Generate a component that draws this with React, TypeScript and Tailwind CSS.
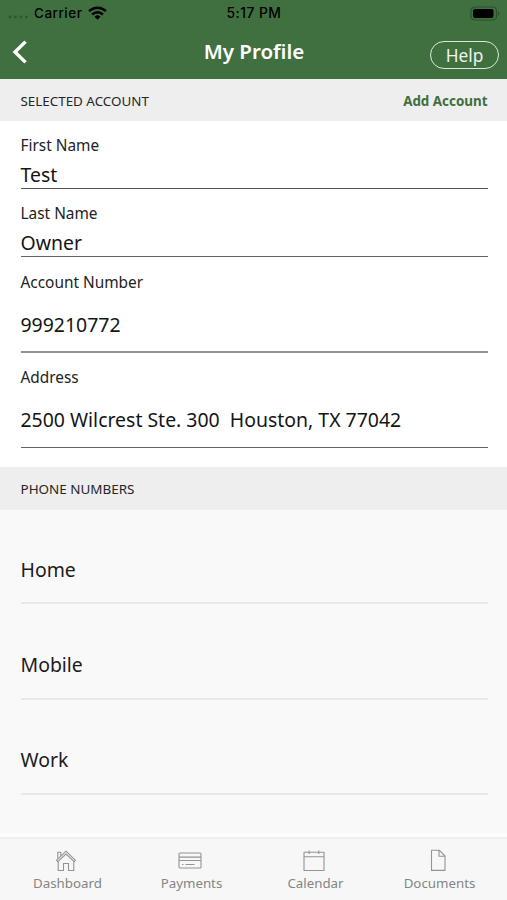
import type { ReactNode } from "react";

type FieldProps = {
  label: string;
  value: string;
  labelClass: string;
  valueClass: string;
  className: string;
};

const Field = ({ label, value, labelClass, valueClass, className }: FieldProps) => (
  <div className={`flex flex-col ${className}`}>
    <label className={`block text-[15.4px] leading-5 text-[#222] ${labelClass}`}>{label}</label>
    <div className={`whitespace-pre text-[19.45px] leading-6 text-[#151515] ${valueClass}`}>{value}</div>
  </div>
);

const PhoneRow = ({ label, className }: { label: string; className: string }) => (
  <div className={`border-b-2 border-[#e8e8e8] text-[19.45px] leading-6 text-[#1c1c1c] ${className}`}>
    {label}
  </div>
);

const Tab = ({ label, children }: { label: string; children: ReactNode }) => (
  <button className="flex w-[124px] flex-col items-center pt-[10px]">
    <svg
      className="mr-[3px] h-6 w-6"
      viewBox="0 0 24 24"
      fill="none"
      stroke="#949494"
      strokeWidth="1.1"
      strokeLinejoin="round"
    >
      {children}
    </svg>
    <span className="text-[13.3px] leading-5 text-[#858585]">{label}</span>
  </button>
);

const StatusBar = () => (
  <div className="flex h-[26px] items-center justify-between pl-[8px] pr-[7px] font-['Inter',sans-serif] text-[13.5px] font-medium tracking-[0.5px] text-black">
    <div className="flex w-[180px] items-center">
      <svg className="mt-[8px] h-[4px] w-[21px]" viewBox="0 0 21 4" fill="#2d552d">
        <circle cx="2" cy="2" r="1.4" />
        <circle cx="7.5" cy="2" r="1.4" />
        <circle cx="13" cy="2" r="1.4" />
        <circle cx="18.5" cy="2" r="1.4" />
      </svg>
      <span className="ml-[5px]">Carrier</span>
      <svg className="ml-[6px] h-[14px] w-[19px]" viewBox="0 0 19 14" fill="none" stroke="#000" strokeWidth="2.5">
        <path d="M1.1 5.1a12 12 0 0 1 16.8 0" />
        <path d="M4.1 8.5a7.7 7.7 0 0 1 10.8 0" />
        <path d="M9.5 13.8 6.5 10.8a4.3 4.3 0 0 1 6 0z" fill="#000" stroke="none" />
      </svg>
    </div>
    <span className="text-[13.8px]">5:17 PM</span>
    <div className="flex w-[180px] justify-end">
      <svg className="h-[15px] w-[30px]" viewBox="0 0 30 15">
        <rect x="1" y="1" width="25.5" height="13" rx="3.8" fill="none" stroke="#2c502c" strokeWidth="1.2" />
        <rect x="3" y="3" width="20.5" height="9" rx="2" fill="#000" />
        <path d="M28 5.3c1.8.6 1.8 3.8 0 4.4z" fill="#2c502c" />
      </svg>
    </div>
  </div>
);

const App = () => {
  return (
    <div className="flex h-[900px] w-[507px] flex-col overflow-hidden bg-white font-['Noto_Sans',sans-serif]">
      <header className="h-[79px] shrink-0 bg-[#40703f]">
        <StatusBar />
        <div className="flex h-[53px] items-start justify-between pl-[12px] pr-[8px]">
          <button className="w-[66px] pt-[14px]">
            <svg className="h-6 w-4" viewBox="0 0 16 24" fill="none" stroke="#fff" strokeWidth="3.4">
              <path d="M13.6 1.6 3 12l10.6 10.4" />
            </svg>
          </button>
          <h1 className="mt-[11px] text-[20.5px] font-semibold leading-7 text-white">My Profile</h1>
          <button className="mt-[15px] h-[28px] w-[69px] rounded-full border-[1.5px] border-[#dce8dc] text-[17.3px] leading-[25px] text-[#edf4ed]">
            Help
          </button>
        </div>
      </header>

      <div className="flex h-[42px] shrink-0 items-center justify-between bg-[#eee] pl-[20.5px] pr-[19.5px] pt-[2px] text-[13.4px]">
        <span className="text-[#262626]">SELECTED ACCOUNT</span>
        <span className="font-bold text-[#3d703c]">Add Account</span>
      </div>

      <section className="h-[346px] shrink-0 pl-[20.5px] pr-[19.5px]">
        <Field
          label="First Name"
          value="Test"
          className="h-[68px] border-b-[1px] border-[#555]"
          labelClass="pt-[15px]"
          valueClass="mt-[7px]"
        />
        <Field
          label="Last Name"
          value="Owner"
          className="h-[68px] border-b-[1px] border-[#666]"
          labelClass="pt-[15px]"
          valueClass="mt-[7px]"
        />
        <Field
          label="Account Number"
          value="999210772"
          className="h-[96px] border-b-2 border-[#92948e]"
          labelClass="pt-[16px]"
          valueClass="mt-[20px]"
        />
        <Field
          label="Address"
          value="2500 Wilcrest Ste. 300  Houston, TX 77042"
          className="h-[95px] border-b-[1px] border-[#666]"
          labelClass="pt-[15px]"
          valueClass="mt-[20px]"
        />
      </section>

      <div className="flex h-[43px] shrink-0 items-center bg-[#eee] pl-[20.5px] pt-[2px] text-[13.45px] text-[#262626]">
        PHONE NUMBERS
      </div>

      <section className="grow border-b-4 border-[#fdfdfd] bg-[#f9f9f9] pl-[20.5px] pr-[19.5px]">
        <PhoneRow label="Home" className="h-[94px] pt-[48px]" />
        <PhoneRow label="Mobile" className="h-[96px] pt-[49px]" />
        <PhoneRow label="Work" className="h-[95px] pt-[48px]" />
      </section>

      <nav className="flex h-[63px] shrink-0 border-t-2 border-[#eee] bg-[#f7f7f7] pl-[5.5px]">
        <Tab label="Dashboard">
          <path d="M2.5 11.3 12 2.2l9.5 9.1-1.3 1.4L12 5l-8.2 7.7zM3.8 9.8V3.2h3v3.9M4.2 12.5v9h5.3v-7h5v7h5.3v-9" />
        </Tab>
        <Tab label="Payments">
          <rect x="1" y="4" width="22" height="15" rx="1" />
          <path d="M1 8.1h22M1 11.5h22M4 15.5h1.5M7.5 15.5h9" />
        </Tab>
        <Tab label="Calendar">
          <path d="M2 3.2h20v18.3H2zM2 7.8h20M7.2 1.5v3.4M16.8 1.5v3.4" />
        </Tab>
        <Tab label="Documents">
          <path d="M5.5 1.3h8l5.5 5.7v14.4H5.5zM13 1.3v6h6" />
        </Tab>
      </nav>
    </div>
  );
};

export default App;
